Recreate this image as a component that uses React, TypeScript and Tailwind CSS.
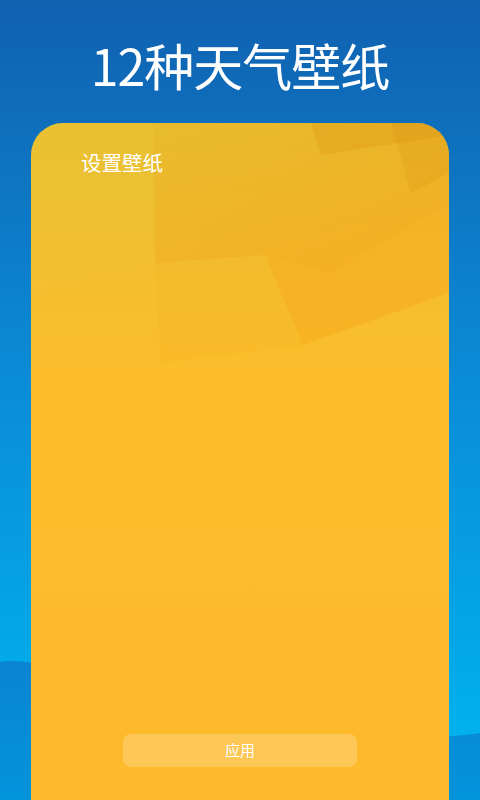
import React from "react";

export default function App() {
  return (
    <div
      className="relative h-[800px] w-[480px] overflow-hidden bg-gradient-to-b from-[#1061b0] via-[#0a8ed8] to-[#00b8f0]"
      style={{ fontFamily: '"Noto Sans CJK SC", "Noto Sans", sans-serif' }}
    >
      <svg className="absolute inset-0" width="480" height="800" viewBox="0 0 480 800">
        <defs>
          <linearGradient id="wave" x1="0" y1="0" x2="0" y2="1">
            <stop offset="0" stopColor="#0a84d2" />
            <stop offset="1" stopColor="#0394dc" />
          </linearGradient>
        </defs>
        <path d="M0 662 C 60 650 300 760 480 733 L480 800 L0 800 Z" fill="url(#wave)" />
      </svg>

      <div className="relative flex h-full flex-col">
        <h1 className="mt-[29px] text-center text-[50px] leading-[70px] font-normal tracking-[-1px] text-white">
          12种天气壁纸
        </h1>
        <div className="relative mx-[31px] mt-[24px] flex flex-1 flex-col overflow-hidden rounded-t-[32px] bg-gradient-to-b from-[#e8c032] via-[#fdbd2b] via-40% to-[#fdba2b]">
          <svg className="absolute inset-0" width="418" height="677" viewBox="0 0 418 677">
            <defs>
              <linearGradient id="f1" x1="0" y1="0" x2="1" y2="1">
                <stop offset="0" stopColor="#e7a21c" stopOpacity="0.15" />
                <stop offset="1" stopColor="#f7a014" stopOpacity="0.55" />
              </linearGradient>
            </defs>
            <polygon points="122,0 418,0 418,80 300,150 234,132 124,140" fill="url(#f1)" />
            <polygon points="280,0 418,0 418,12 290,32" fill="#d98a10" opacity="0.25" />
            <polygon points="234,132 300,150 418,80 418,170 272,222" fill="#f79c12" opacity="0.3" />
            <polygon points="0,0 122,0 124,140 0,170" fill="#f0d040" opacity="0.1" />
            <polygon points="124,140 234,132 272,222 130,240" fill="#f5a818" opacity="0.1" />
            <polygon points="360,0 418,0 418,50 380,70" fill="#d88a10" opacity="0.2" />
          </svg>
          <div className="relative pl-[50px] pt-[25px] text-[20.5px] leading-[28px] text-white">设置壁纸</div>
          <div className="flex-1" />
          <div className="relative mx-[92px] mb-[33px] flex h-[33px] items-center justify-center rounded-[8px] bg-white/20 text-[15px] text-white">
            应用
          </div>
        </div>
      </div>
    </div>
  );
}
